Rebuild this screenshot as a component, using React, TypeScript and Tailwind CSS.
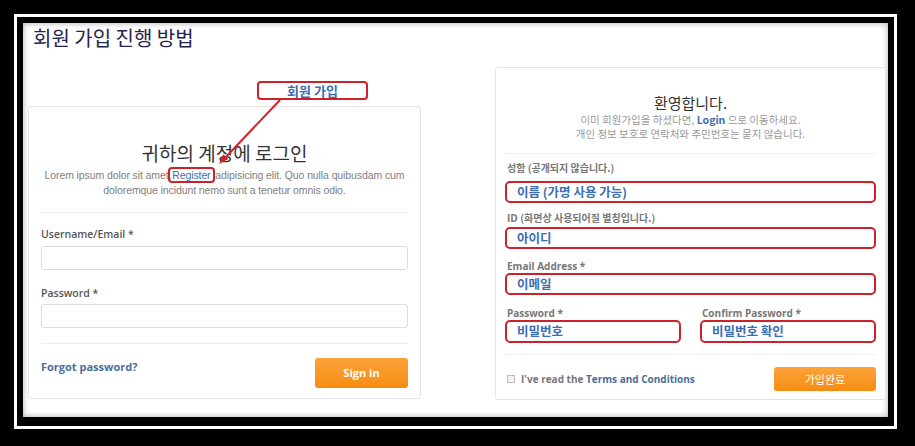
import React from "react";

const KR = "font-['Noto_Sans_CJK_KR',sans-serif]";
const EN = "font-['Open_Sans','Noto_Sans_CJK_KR',sans-serif]";

function RedBox({ children, className = "" }: { children?: React.ReactNode; className?: string }) {
  return (
    <div
      className={`h-[22px] border-2 border-[#cc2229] rounded-[5px] flex items-center pl-[10px] text-[12.5px] font-bold text-[#3b6db4] ${KR} ${className}`}
    >
      {children}
    </div>
  );
}

function Label({ children }: { children: React.ReactNode }) {
  return <div className={`pl-[2px] text-[10px] leading-[14px] font-bold text-[#777] ${EN}`}>{children}</div>;
}

function LoginCard() {
  return (
    <div className="w-[393px] h-[293px] mb-[1px] border border-[#e4e4e4] rounded-[3px] px-[12px] bg-white flex flex-col">
      <h2 className={`mt-[34px] text-[19px] leading-[24px] text-center text-[#333] ${KR}`}>귀하의 계정에 로그인</h2>
      <p className="mt-[3px] text-[10.5px] leading-[15px] tracking-[-0.1px] text-center text-[#808080] font-['Liberation_Sans',sans-serif] whitespace-nowrap">
        Lorem ipsum dolor sit amet,{" "}
        <span className="outline-2 outline-[#cc2229] rounded-[2px] px-[2px] text-[#3c6ea6] -ml-[4px]">Register</span>{" "}
        adipisicing elit. Quo nulla quibusdam cum
        <br />
        doloremque incidunt nemo sunt a tenetur omnis odio.
      </p>
      <div className="mt-[14px] border-t border-[#eee]" />
      <label className={`mt-[14px] text-[10.5px] leading-[14px] font-semibold text-[#555] ${EN}`}>Username/Email *</label>
      <div className="mt-[5px] h-[24px] border border-[#ddd] rounded-[3px]" />
      <label className={`mt-[16px] text-[10.5px] leading-[14px] font-semibold text-[#555] ${EN}`}>Password *</label>
      <div className="mt-[4px] h-[24px] border border-[#ddd] rounded-[3px]" />
      <div className="mt-[15px] border-t border-[#eee]" />
      <div className="flex justify-between items-start">
        <a className={`mt-[16px] text-[11px] leading-[14px] font-bold text-[#4a6e98] ${EN}`}>Forgot password?</a>
        <button
          className={`mt-[14px] w-[93px] h-[30px] rounded-[3px] bg-linear-to-b from-[#fca338] to-[#f68c0e] text-white text-[11px] font-bold ${EN}`}
        >
          Sign in
        </button>
      </div>
    </div>
  );
}

function SignupCard() {
  return (
    <div className="w-[391px] h-[333px] border border-[#e4e4e4] rounded-[3px] px-[9px] bg-white flex flex-col">
      <h2 className={`mt-[25px] text-[15px] leading-[20px] text-center text-[#333] ${KR}`}>환영합니다.</h2>
      <p className={`text-[10.5px] leading-[14px] text-center text-[#999] ${KR}`}>
        이미 회원가입을 하셨다면, <span className="text-[#3b6db4] font-bold">Login</span> 으로 이동하세요.
        <br />
        개인 정보 보호로 연락처와 주민번호는 묻지 않습니다.
      </p>
      <div className="mt-[12px] border-t border-[#eee]" />
      <div className="mt-[7px]">
        <Label>
          <span className={KR}>성함 (공개되지 않습니다.)</span>
        </Label>
      </div>
      <RedBox className="mt-[6px]">이름 (가명 사용 가능)</RedBox>
      <div className="mt-[8px]">
        <Label>
          ID <span className={KR}>(화면상 사용되어질 별칭입니다.)</span>
        </Label>
      </div>
      <RedBox className="mt-[2px]">아이디</RedBox>
      <div className="mt-[10px]">
        <Label>Email Address *</Label>
      </div>
      <RedBox>이메일</RedBox>
      <div className="mt-[11px] grid grid-cols-2 gap-x-[19px]">
        <Label>Password *</Label>
        <Label>Confirm Password *</Label>
        <RedBox className="h-[23px]">비밀번호</RedBox>
        <RedBox className="h-[23px]">비밀번호 확인</RedBox>
      </div>
      <div className="mt-[11px] border-t border-[#eee]" />
      <div className="flex justify-between items-start">
        <div className={`mt-[17px] flex items-center gap-[6px] pl-[2px] text-[10px] leading-[14px] font-bold ${EN}`}>
          <span className="w-[8px] h-[8px] border border-[#bbb] bg-[#f2f2f2]" />
          <span className="text-[#777]">
            I've read the <span className="text-[#4a6e98]">Terms and Conditions</span>
          </span>
        </div>
        <button
          className={`mt-[12px] w-[102px] h-[24px] rounded-[3px] bg-linear-to-b from-[#fca338] to-[#f68c0e] text-white text-[11px] ${KR}`}
        >
          가입완료
        </button>
      </div>
    </div>
  );
}

export default function App() {
  return (
    <div className="w-[915px] h-[446px] bg-black pt-[14px] pl-[14px] pr-[18px] pb-[17px]">
      <div className="border-[3px] border-white">
        <div className="border-black border-t-[6px] border-l-[6px] border-r-[6px] border-b-[9px]">
          <div className="relative w-[865px] h-[394px] bg-white flex flex-col shadow-[inset_0_0_6px_rgba(0,0,0,0.35)]">
            <h1 className={`pl-[10px] pt-[1px] text-[20px] leading-[28px] text-[#26234d] ${KR}`}>회원 가입 진행 방법</h1>
            <div className="flex-1" />
            <div className="flex justify-between items-end pl-[5px] pr-[2px] pb-[17px]">
              <LoginCard />
              <SignupCard />
            </div>

            {/* annotation callout */}
            <div
              className={`absolute left-[234px] top-[58px] w-[111px] h-[19px] border-2 border-[#cc2229] rounded-[4px] bg-white flex items-center justify-center text-[13px] font-bold text-[#3b6db4] ${KR}`}
            >
              회원 가입
            </div>
            <svg className="absolute inset-0 pointer-events-none" width="865" height="394">
              <line x1="257" y1="77" x2="201" y2="136" stroke="#d4202a" strokeWidth="2" />
              <polygon points="196,141 205.4,136.1 200.3,131.3" fill="#d4202a" />
            </svg>
          </div>
        </div>
      </div>
    </div>
  );
}
